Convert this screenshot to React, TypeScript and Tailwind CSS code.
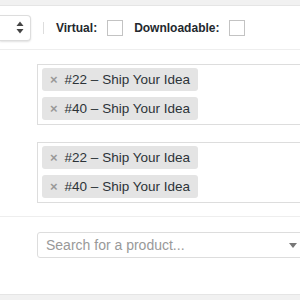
const linked = ['#22 – Ship Your Idea', '#40 – Ship Your Idea'];

function Tag({ label }: { label: string }) {
  return (
    <div className="inline-flex h-[23px] items-center self-start rounded-[3px] bg-[#e4e4e4] pl-[8px] pr-[8px]">
      <span className="text-[13px] font-bold leading-none text-[#999]">×</span>
      <span className="ml-[7px] text-[13.5px] leading-none text-[#2c3338]">{label}</span>
    </div>
  );
}

function TagBox() {
  return (
    <div className="ml-[37px] flex h-[61px] w-[280px] shrink-0 flex-col gap-[6px] border border-[#ddd] bg-white pb-[4px] pl-[4px] pt-[3px]">
      {linked.map((l) => (
        <Tag key={l} label={l} />
      ))}
    </div>
  );
}

function Checkbox() {
  return <span className="block h-[16px] w-[16px] border border-[#c3c3c3] bg-white" />;
}

export default function App() {
  return (
    <div className="flex h-[300px] w-[300px] flex-col overflow-hidden bg-white font-['Liberation_Sans',Arial,sans-serif]">
      {/* top band */}
      <div className="h-[6px] shrink-0 border-b border-[#e5e5e5] bg-[#f1f1f1]" />

      {/* product type toolbar */}
      <div className="flex h-[44px] shrink-0 items-center border-b border-[#eee]">
        <div className="flex h-[26px] w-[31px] items-center justify-end rounded-r-[4px] border border-l-0 border-[#ddd] bg-white pr-[6px] shadow-[0_1px_2px_rgba(0,0,0,0.12)]">
          <svg width="8" height="13" viewBox="0 0 8 13">
            <path d="M4 0.5 L7.5 5 L0.5 5 Z" fill="#444" />
            <path d="M4 12.5 L7.5 8 L0.5 8 Z" fill="#444" />
          </svg>
        </div>
        <span className="ml-[12px] h-[12px] w-px bg-[#ddd]" />
        <span className="ml-[12px] text-[12px] font-bold text-[#23282d]">Virtual:</span>
        <span className="ml-[10px]">
          <Checkbox />
        </span>
        <span className="ml-[11px] text-[12px] font-bold text-[#23282d]">Downloadable:</span>
        <span className="ml-[10px]">
          <Checkbox />
        </span>
      </div>

      {/* upsells / cross-sells */}
      <div className="flex shrink-0 flex-col pt-[14px]">
        <TagBox />
        <div className="mt-[17px]">
          <TagBox />
        </div>
      </div>

      <div className="mt-[13px] h-px shrink-0 bg-[#eee]" />

      {/* grouped products */}
      <div className="ml-[37px] mt-[15px] flex h-[26px] w-[270px] shrink-0 items-center justify-between rounded-[3px] border border-[#ddd] bg-white pl-[8px] pr-[9px]">
        <span className="text-[14px] leading-none text-[#999]">Search for a product...</span>
        <svg width="8" height="5" viewBox="0 0 8 5">
          <path d="M0 0 L8 0 L4 5 Z" fill="#777" />
        </svg>
      </div>

      <div className="mt-auto h-[6px] shrink-0 border-t border-[#e5e5e5] bg-[#f1f1f1]" />
    </div>
  );
}
